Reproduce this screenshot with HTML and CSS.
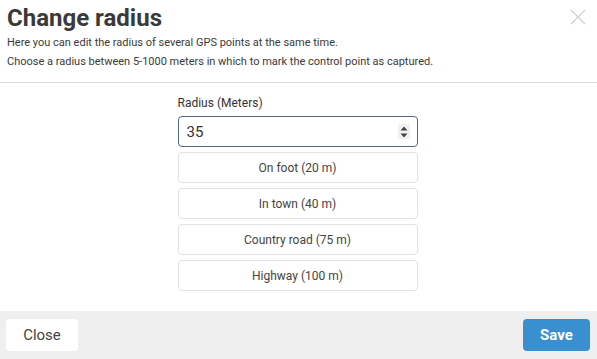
FILE: index.html
```html
<!DOCTYPE html>
<html lang="en">
<head>
  <meta charset="UTF-8">
  <meta name="viewport" content="width=device-width, initial-scale=1.0">
  <title>Change radius</title>
  <link rel="stylesheet" href="styles.css">
</head>
<body>
  <div class="modal">
    <div class="modal-header">
      <h1>Change radius</h1>
      <button type="button" class="close-x" aria-label="Close">
        <svg width="16" height="16" viewBox="0 0 16 16">
          <path d="M1 1L15 15M15 1L1 15" stroke="#d0d0d0" stroke-width="1.2" fill="none"/>
        </svg>
      </button>
      <p>Here you can edit the radius of several GPS points at the same time.</p>
      <p>Choose a radius between 5-1000 meters in which to mark the control point as captured.</p>
    </div>

    <div class="modal-body">
      <div class="radius-form">
        <label for="radius">Radius (Meters)</label>
        <div class="number-input">
          <input type="text" id="radius" value="35">
          <span class="spinner">
            <svg width="8" height="14" viewBox="0 0 8 14">
              <path d="M0.5 5.5L4 1.5L7.5 5.5Z" fill="#444"/>
              <path d="M0.5 8.5L4 12.5L7.5 8.5Z" fill="#444"/>
            </svg>
          </span>
        </div>
        <button type="button" class="preset">On foot (20 m)</button>
        <button type="button" class="preset">In town (40 m)</button>
        <button type="button" class="preset">Country road (75 m)</button>
        <button type="button" class="preset">Highway (100 m)</button>
      </div>
    </div>

    <div class="modal-footer">
      <button type="button" class="btn-close">Close</button>
      <button type="button" class="btn-save">Save</button>
    </div>
  </div>
</body>
</html>
```

FILE: styles.css
```css
body {
  margin: 0;
  font-family: Roboto, 'Liberation Sans', sans-serif;
  background: white;
  color: #333;
}

.modal {
  width: 597px;
  height: 359px;
  display: flex;
  flex-direction: column;
}

.modal-header {
  position: relative;
  padding: 3px 7px 0;
  height: 79px;
  border-bottom: 1px solid #dedede;
  box-sizing: content-box;
}

.modal-header h1 {
  margin: 0;
  font-size: 24px;
  font-weight: 700;
  color: #3a3a3a;
  line-height: 30px;
}

.modal-header p {
  margin: 0;
  font-size: 11px;
  line-height: 19px;
  color: #3a3a3a;
}

.close-x {
  position: absolute;
  top: 9px;
  right: 11px;
  padding: 0;
  border: none;
  background: none;
  cursor: pointer;
}

.modal-body {
  flex: 1;
  display: flex;
  justify-content: center;
}

.radius-form {
  width: 240px;
  display: flex;
  flex-direction: column;
  gap: 5px;
  padding-top: 13px;
  margin-left: -2px;
}

.radius-form label {
  font-size: 12px;
  color: #333;
  line-height: 14px;
  margin-bottom: 1px;
}

.number-input {
  position: relative;
  height: 31px;
  border: 1px solid #4d6b7f;
  border-radius: 4px;
  box-sizing: border-box;
}

.number-input input {
  width: 100%;
  height: 100%;
  border: none;
  outline: none;
  background: none;
  padding: 0 0 0 8px;
  font-family: inherit;
  font-size: 15px;
  color: #333;
  box-sizing: border-box;
}

.spinner {
  position: absolute;
  right: 7px;
  top: 7px;
  width: 12px;
  height: 15px;
  background: #f1f1f1;
  display: flex;
  align-items: center;
  justify-content: center;
}

.preset {
  height: 31px;
  border: 1px solid #e2e2e2;
  border-radius: 4px;
  background: white;
  font-family: inherit;
  font-size: 12px;
  color: #444;
  cursor: pointer;
}

.modal-footer {
  height: 48px;
  background: #efefef;
  display: flex;
  justify-content: space-between;
  align-items: flex-start;
  padding: 8px 7px 0 6px;
  box-sizing: border-box;
}

.modal-footer button {
  height: 32px;
  border: none;
  border-radius: 4px;
  font-family: inherit;
  font-size: 15px;
  cursor: pointer;
}

.btn-close {
  width: 72px;
  background: white;
  color: #444;
}

.btn-save {
  width: 67px;
  background: #3a8fd0;
  color: white;
  font-weight: 700;
}
```
